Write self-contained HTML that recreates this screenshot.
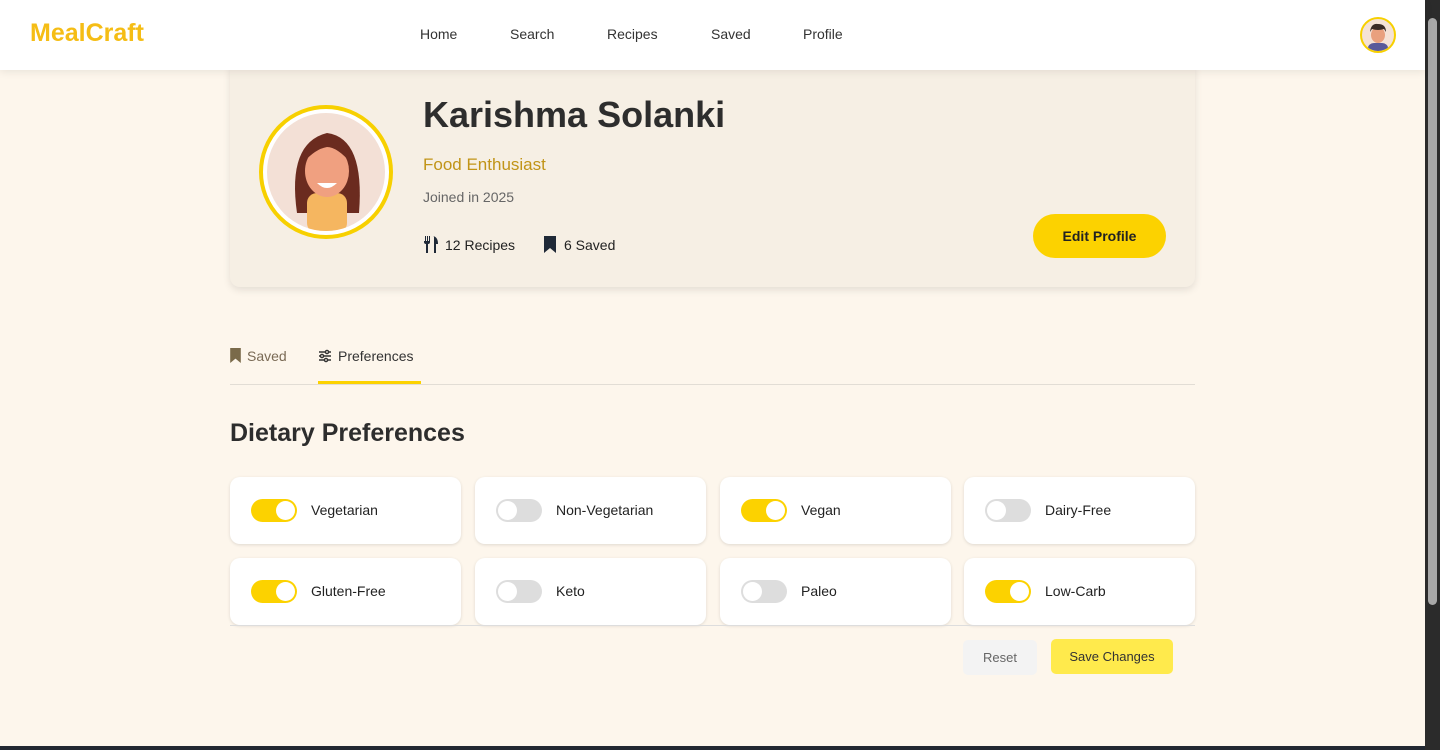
<!DOCTYPE html>
<html><head><meta charset="utf-8"><style>
*{box-sizing:border-box;margin:0;padding:0}
body{width:1440px;height:750px;overflow:hidden;background:#fdf6ec;font-family:"Liberation Sans",sans-serif;position:relative;color:#2d2d2d}
.hdr{position:absolute;left:0;top:0;width:1425px;height:70px;background:#fff;box-shadow:0 2px 8px rgba(0,0,0,.08);z-index:2}
.logo{position:absolute;left:30px;top:19px;font-size:25px;font-weight:bold;color:#f5bd15}
.nav a{position:absolute;top:26px;font-size:14px;color:#333;text-decoration:none}
.av{position:absolute;left:1360px;top:17px;width:36px;height:36px;border-radius:50%;border:2px solid #f7d000;background:#f5e2d6;overflow:hidden}
.sb{position:absolute;left:1425px;top:0;width:15px;height:750px;background:#2b2b2b}
.thumb{position:absolute;left:1428px;top:18px;width:9px;height:587px;background:#a8a8a8;border-radius:5px}
.bot{position:absolute;left:0;top:746px;width:1425px;height:4px;background:#222831}
.card{position:absolute;left:230px;top:60px;width:965px;height:227px;background:#f6efe4;border-radius:10px;box-shadow:0 3px 8px rgba(0,0,0,.1)}
.pic{position:absolute;left:259px;top:105px;width:134px;height:134px;border-radius:50%;border:4px solid #f7d000;background:#fff;padding:4px}
.pic div{width:100%;height:100%;border-radius:50%;background:#f3e0d6;overflow:hidden;position:relative}
.name{position:absolute;left:423px;top:94px;font-size:36px;font-weight:bold;color:#2d2d2d}
.role{position:absolute;left:423px;top:155px;font-size:17px;color:#c19417}
.join{position:absolute;left:423px;top:189px;font-size:14px;color:#666}
.st{position:absolute;top:236px;font-size:14px;color:#222}
.edit{position:absolute;left:1033px;top:214px;width:133px;height:44px;border-radius:22px;background:#fcd200;font-size:14px;font-weight:bold;text-align:center;line-height:44px;color:#222}
.tab{position:absolute;top:348px;font-size:14px}
.tabline{position:absolute;left:230px;top:384px;width:965px;height:1px;background:#e2ddd5}
.ul{position:absolute;left:318px;top:381px;width:103px;height:3px;background:#fcd200}
h2{position:absolute;left:230px;top:419px;font-size:25px;font-weight:bold;color:#2d2d2d}
.p{position:absolute;width:231px;height:67px;background:#fff;border-radius:10px;box-shadow:0 1px 3px rgba(0,0,0,.12)}
.tg{position:absolute;left:21px;top:22px;width:46px;height:23px;border-radius:12px;background:#ddd}
.tg::after{content:"";position:absolute;top:2px;left:2px;width:19px;height:19px;border-radius:50%;background:#fff}
.tg.on{background:#fcd200}.tg.on::after{left:25px}
.p span{position:absolute;left:81px;top:25px;font-size:14px;color:#222}
.reset{position:absolute;left:963px;top:640px;width:74px;height:35px;background:#f3f3f3;border-radius:5px;font-size:13px;color:#666;text-align:center;line-height:35px}
.save{position:absolute;left:1051px;top:639px;width:122px;height:35px;background:#ffea4c;border-radius:5px;font-size:13px;color:#333;text-align:center;line-height:35px}
</style></head><body>
<div class="hdr"><div class="logo">MealCraft</div>
<div class="nav"><a style="left:420px">Home</a><a style="left:510px">Search</a><a style="left:607px">Recipes</a><a style="left:711px">Saved</a><a style="left:803px">Profile</a></div>
<div class="av"><svg width="32" height="32" viewBox="0 0 32 32"><rect x="6" y="24" width="20" height="10" rx="6" fill="#5a5a9a"/><ellipse cx="16" cy="16" rx="7" ry="8" fill="#e9a07e"/><path d="M8 13 Q9 4 16 5 Q24 5 24 13 L22 10 Q16 12 10 10Z" fill="#3a2a25"/></svg></div></div>
<div class="sb"></div><div class="thumb"></div><div class="bot"></div>
<div class="card"></div>
<div class="pic"><div><svg width="118" height="118" viewBox="0 0 118 118"><path d="M30 100 Q20 30 60 20 Q98 25 92 100Z" fill="#6b2b1f"/><rect x="40" y="80" width="40" height="40" rx="10" fill="#f5b660"/><ellipse cx="60" cy="58" rx="22" ry="26" fill="#f0a080"/><path d="M36 50 Q45 22 60 24 Q78 24 84 50 Q70 34 60 34 Q48 36 36 50Z" fill="#6b2b1f"/><path d="M50 70 Q60 80 70 70Z" fill="#fff"/></svg></div></div>
<div class="name">Karishma Solanki</div>
<div class="role">Food Enthusiast</div>
<div class="join">Joined in 2025</div>
<div class="st" style="left:423px"><svg width="16" height="17" viewBox="0 0 16 17" style="vertical-align:-3px;margin-right:6px"><path d="M1 0v6q0 2 2 2v9h2V8q2 0 2-2V0H6v5H5V0H4v5H3V0H2v5H1Z M10 0q5 1 5 8h-2v9h-2V0Z" fill="#1f2937"/></svg>12 Recipes</div>
<div class="st" style="left:544px"><svg width="12" height="17" viewBox="0 0 12 17" style="vertical-align:-3px;margin-right:8px"><path d="M0 0h12v17l-6-5-6 5Z" fill="#1f2937"/></svg>6 Saved</div>
<div class="edit">Edit Profile</div>
<div class="tab" style="left:230px;color:#7a6a55"><svg width="11" height="15" viewBox="0 0 12 17" style="vertical-align:-2px;margin-right:6px"><path d="M0 0h12v17l-6-5-6 5Z" fill="#7a6a4a"/></svg>Saved</div>
<div class="tab" style="left:318px;color:#333"><svg width="14" height="14" viewBox="0 0 14 14" style="vertical-align:-2px;margin-right:6px" stroke="#333" stroke-width="1.4" fill="none"><path d="M1 3h12M1 7h12M1 11h12"/><circle cx="9" cy="3" r="1.6" fill="#fdf6ec"/><circle cx="4" cy="7" r="1.6" fill="#fdf6ec"/><circle cx="8" cy="11" r="1.6" fill="#fdf6ec"/></svg>Preferences</div>
<div class="tabline"></div><div class="ul"></div>
<h2>Dietary Preferences</h2>
<div class="p" style="left:230px;top:477px"><div class="tg on"></div><span>Vegetarian</span></div>
<div class="p" style="left:475px;top:477px"><div class="tg"></div><span>Non-Vegetarian</span></div>
<div class="p" style="left:720px;top:477px"><div class="tg on"></div><span>Vegan</span></div>
<div class="p" style="left:964px;top:477px"><div class="tg"></div><span>Dairy-Free</span></div>
<div class="p" style="left:230px;top:558px"><div class="tg on"></div><span>Gluten-Free</span></div>
<div class="p" style="left:475px;top:558px"><div class="tg"></div><span>Keto</span></div>
<div class="p" style="left:720px;top:558px"><div class="tg"></div><span>Paleo</span></div>
<div class="p" style="left:964px;top:558px"><div class="tg on"></div><span>Low-Carb</span></div>
<div style="position:absolute;left:230px;top:625px;width:965px;height:1px;background:#ddd"></div>
<div class="reset">Reset</div><div class="save">Save Changes</div>
</body></html>
